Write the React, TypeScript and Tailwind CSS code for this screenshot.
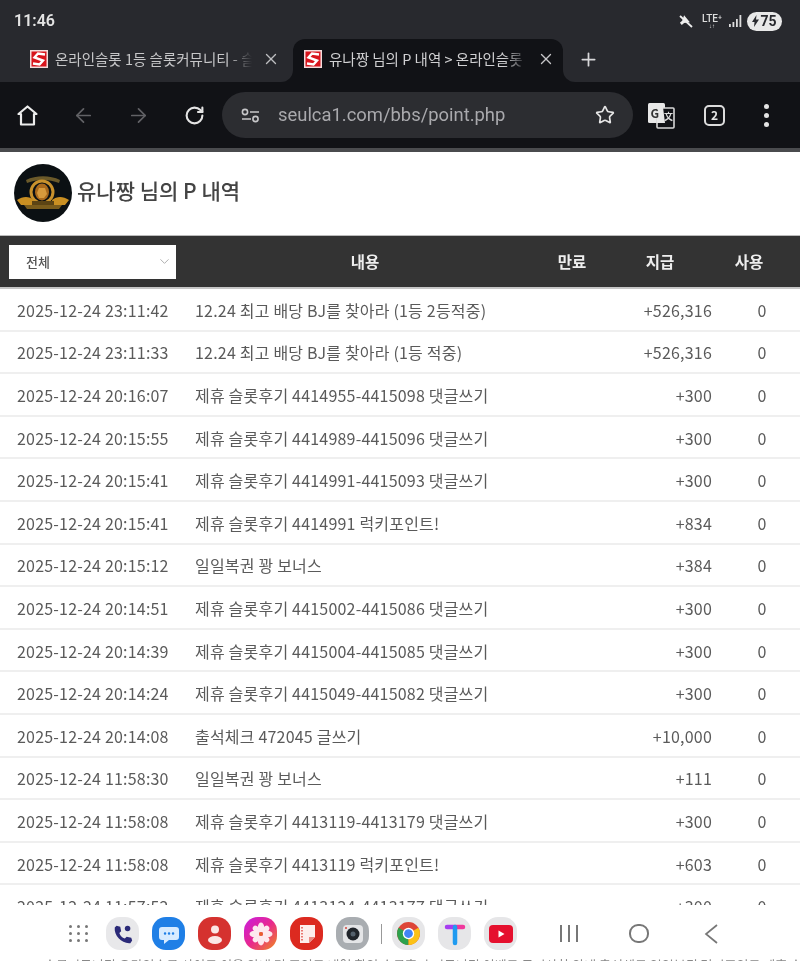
import { ChevronDown, ArrowLeft, ArrowRight, RotateCw, Star, X, Plus } from 'lucide-react'

const rows = [
  ['2025-12-24 23:11:42', '12.24 최고 배당 BJ를 찾아라 (1등 2등적중)', '+526,316'],
  ['2025-12-24 23:11:33', '12.24 최고 배당 BJ를 찾아라 (1등 적중)', '+526,316'],
  ['2025-12-24 20:16:07', '제휴 슬롯후기 4414955-4415098 댓글쓰기', '+300'],
  ['2025-12-24 20:15:55', '제휴 슬롯후기 4414989-4415096 댓글쓰기', '+300'],
  ['2025-12-24 20:15:41', '제휴 슬롯후기 4414991-4415093 댓글쓰기', '+300'],
  ['2025-12-24 20:15:41', '제휴 슬롯후기 4414991 럭키포인트!', '+834'],
  ['2025-12-24 20:15:12', '일일복권 꽝 보너스', '+384'],
  ['2025-12-24 20:14:51', '제휴 슬롯후기 4415002-4415086 댓글쓰기', '+300'],
  ['2025-12-24 20:14:39', '제휴 슬롯후기 4415004-4415085 댓글쓰기', '+300'],
  ['2025-12-24 20:14:24', '제휴 슬롯후기 4415049-4415082 댓글쓰기', '+300'],
  ['2025-12-24 20:14:08', '출석체크 472045 글쓰기', '+10,000'],
  ['2025-12-24 11:58:30', '일일복권 꽝 보너스', '+111'],
  ['2025-12-24 11:58:08', '제휴 슬롯후기 4413119-4413179 댓글쓰기', '+300'],
  ['2025-12-24 11:58:08', '제휴 슬롯후기 4413119 럭키포인트!', '+603'],
  ['2025-12-24 11:57:52', '제휴 슬롯후기 4413124-4413177 댓글쓰기', '+300'],
]

const Favicon = () => (
  <svg width="18" height="18" viewBox="0 0 18 18" className="shrink-0">
    <rect width="18" height="18" fill="#f3dcdc" />
    <rect x="1.5" y="1.5" width="15" height="15" fill="#d8141c" />
    <path d="M15 4.5L8 3.5 4.5 7.5l8.5 3-3.5 4L3 13.5" fill="none" stroke="#fff" strokeWidth="2.4" />
  </svg>
)

const Avatar = () => (
  <svg width="58" height="58" viewBox="0 0 58 58" className="shrink-0">
    <circle cx="29" cy="29" r="29" fill="#0b1013" />
    <path d="M12 16c10-5 24-5 34 0l-1 3c-10-4-22-4-32 0z" fill="#6b5a2a" />
    <circle cx="28" cy="28" r="11" fill="none" stroke="#c8912c" strokeWidth="3" />
    <ellipse cx="28" cy="28" rx="7" ry="8.5" fill="#a9691c" />
    <path d="M25 24h6l2 6-3 4h-5l-2-5z" fill="#d79a3c" />
    <path d="M3 36c6-4 12-4 17 0l-1 5H7zM55 36c-6-4-12-4-17 0l1 5h12z" fill="#c98f22" />
    <path d="M10 41h38l-3 4H13z" fill="#7a5c1c" />
    <path d="M18 37h22v4H18z" fill="#5c4414" />
  </svg>
)

const DockIcon = ({ bg, children }: { bg: string; children: React.ReactNode }) => (
  <div className={`flex h-[33px] w-[33px] items-center justify-center rounded-[14px] ${bg}`}>{children}</div>
)

export default function App() {
  return (
    <div className="flex h-[961px] w-[800px] flex-col overflow-hidden bg-white font-['Noto_Sans_CJK_KR','Noto_Sans',sans-serif] blur-[0.5px]">
      <div className="h-[82px] bg-[#28292e]">
        <div className="flex h-[39px] items-center justify-between pl-[14px] pr-[18px] pt-[3px]">
          <span className="font-['Roboto',sans-serif] text-[16px] font-semibold text-[#e4e4e4]">11:46</span>
          <div className="flex items-center">
            <svg width="16" height="16" viewBox="0 0 16 16">
              <path d="M2 6h3l5-3v9L5 9H2z" fill="#eee" transform="rotate(-40 7 8)" />
              <path d="M2 3l12 11" stroke="#eee" strokeWidth="1.8" />
            </svg>
            <div className="ml-[6px] flex w-[24px] flex-col items-center font-['Roboto',sans-serif] text-[10px] leading-[9px] font-medium text-[#ddd]">
              <span>LTE⁺</span>
              <span className="text-[6px] leading-[6px]">↓↑</span>
            </div>
            <svg width="14" height="14" viewBox="0 0 14 14" className="ml-[4px]">
              <path d="M1 10h1.8v3H1zM4.5 8h1.8v5H4.5zM8 5h1.8v8H8zM11.5 1h1.8v12h-1.8z" fill="#ddd" />
            </svg>
            <div className="ml-[5px] flex h-[19px] w-[35px] items-center justify-center gap-[1px] rounded-full bg-[#e8e8e8] font-['Roboto',sans-serif] text-[14px] font-bold text-[#28292e]">
              <svg width="7" height="12" viewBox="0 0 7 12" fill="#28292e">
                <path d="M4.5 0L0 7h2.5L2 12l5-7.5H4z" />
              </svg>
              <span>75</span>
            </div>
          </div>
        </div>
        <div className="flex h-[43px] items-stretch text-[14.5px]">
          <div className="flex w-[293px] items-center pb-[3px] pl-[30px] text-[#c6c6c8]">
            <Favicon />
            <span className="ml-[7px] w-[197px] overflow-hidden whitespace-nowrap [mask-image:linear-gradient(to_right,black_88%,transparent)]">
              온라인슬롯 1등 슬롯커뮤니티 - 슬롯
            </span>
            <X size={18} strokeWidth={1.8} className="ml-[10px] shrink-0 text-[#bdbdc0]" />
          </div>
          <div className="relative flex w-[270px] items-center rounded-t-[12px] bg-[#111216] pb-[3px] pl-[11px] text-[#d0d0d2]">
            <div className="absolute bottom-0 left-[-12px] h-[12px] w-[12px] bg-[#111216]">
              <div className="h-full w-full rounded-br-[12px] bg-[#28292e]" />
            </div>
            <div className="absolute bottom-0 right-[-12px] h-[12px] w-[12px] bg-[#111216]">
              <div className="h-full w-full rounded-bl-[12px] bg-[#28292e]" />
            </div>
            <Favicon />
            <span className="ml-[7px] w-[199px] overflow-hidden whitespace-nowrap [mask-image:linear-gradient(to_right,black_88%,transparent)]">
              유나짱 님의 P 내역 &gt; 온라인슬롯
            </span>
            <X size={18} strokeWidth={1.8} className="ml-[9px] shrink-0 text-[#c6c6c8]" />
          </div>
          <div className="flex w-[50px] items-center justify-center pb-[3px] text-[#d8d8da]">
            <Plus size={21} strokeWidth={2} />
          </div>
        </div>
      </div>

      <div className="flex h-[66px] items-center bg-[#111216]">
        <div className="flex w-[55px] justify-center">
          <svg width="23" height="23" viewBox="0 0 23 23" fill="none" stroke="#ececec" strokeWidth="2.2" strokeLinejoin="round">
            <path d="M11.5 2.5L2.5 10h2.5v10.5h13V10h2.5z" />
          </svg>
        </div>
        <div className="flex w-[56px] justify-center">
          <ArrowLeft size={23} strokeWidth={1.8} className="text-[#626266]" />
        </div>
        <div className="flex w-[55px] justify-center">
          <ArrowRight size={23} strokeWidth={1.8} className="text-[#626266]" />
        </div>
        <div className="flex w-[56px] justify-center">
          <RotateCw size={21} strokeWidth={2.4} className="text-[#e4e4e4]" />
        </div>
        <div className="flex h-[46px] w-[411px] items-center rounded-full bg-[#2c2d31] pl-[19px] pr-[18px]">
          <svg width="19" height="15" viewBox="0 0 19 15" fill="none" stroke="#c6c6c8" strokeWidth="1.6">
            <circle cx="4" cy="4" r="2.6" />
            <path d="M9 4h9M1 11h9" />
            <circle cx="14.5" cy="11" r="2.6" />
          </svg>
          <span className="ml-[18px] flex-1 font-['Roboto',sans-serif] text-[18.4px] text-[#a9a9ad]">
            seulca1.com/bbs/point.php
          </span>
          <Star size={20} strokeWidth={2} className="text-[#e6e6e6]" />
        </div>
        <div className="ml-[13px] flex w-[29px] justify-center">
          <svg width="28" height="27" viewBox="0 0 28 27">
            <rect x="1" y="1" width="17" height="20" rx="1.5" fill="#e8e8e8" />
            <rect x="10" y="6" width="17" height="20" rx="1" fill="#111216" stroke="#d8d8d8" strokeWidth="1.6" />
            <path d="M10 5h6l2 16-8 0z" fill="#e8e8e8" />
            <text x="3.5" y="16" fontSize="12" fontWeight="700" fill="#333">G</text>
            <text x="17" y="18" fontSize="9" fontWeight="700" fill="#ddd">文</text>
          </svg>
        </div>
        <div className="ml-[29px] flex h-[21px] w-[21px] items-center justify-center rounded-[5px] border-2 border-[#dcdcdc] text-[12px] font-bold text-[#e4e4e4]">
          2
        </div>
        <div className="ml-[39px] flex flex-col gap-[4px]">
          <div className="h-[5px] w-[5px] rounded-full bg-[#e4e4e4]" />
          <div className="h-[5px] w-[5px] rounded-full bg-[#e4e4e4]" />
          <div className="h-[5px] w-[5px] rounded-full bg-[#e4e4e4]" />
        </div>
      </div>
      <div className="h-[4px] bg-[#4a4b4e]" />

      <div className="flex h-[84px] items-center gap-[5px] border-b border-[#bbb] pb-[1px] pl-[14px]">
        <Avatar />
        <h1 className="pb-[5px] text-[21px] font-medium text-[#444]">유나짱 님의 P 내역</h1>
      </div>

      <div className="grid h-[53px] grid-cols-[187px_356px_58px_118px_60px] items-center border-b-2 border-[#c6c6c6] bg-[#333333] text-center text-[15.5px] font-bold text-[#eeeeee]">
        <div className="pl-[9px]">
          <div className="flex h-[34px] w-[167px] items-center justify-between bg-white pl-[17px] pr-[4px] text-[13px] font-medium text-[#555]">
            <span>전체</span>
            <ChevronDown size={15} strokeWidth={1.5} className="text-[#aaa]" />
          </div>
        </div>
        <div>내용</div>
        <div>만료</div>
        <div>지급</div>
        <div>사용</div>
      </div>

      <div className="min-h-0 flex-1 overflow-hidden">
        {rows.map(([date, text, amount], i) => (
          <div
            key={i}
            className="grid h-[42.6px] grid-cols-[195px_430px_87px_88px] items-center border-b-2 border-[#efefef] pt-[1px] text-[16px] tracking-[0.2px] text-[#5a5a5a]"
          >
            <div className="pl-[17px] whitespace-nowrap">{date}</div>
            <div className="whitespace-nowrap">{text}</div>
            <div className="text-right">{amount}</div>
            <div className="pl-[12px] text-center">0</div>
          </div>
        ))}
      </div>

      <div className="flex h-[56px] flex-col bg-white">
        <div className="flex h-[51px] items-center pt-[6px]">
          <div className="ml-[69px] grid w-[20px] grid-cols-3 gap-[4px]">
            {Array.from({ length: 9 }).map((_, i) => (
              <div key={i} className="h-[3px] w-[3px] rounded-full bg-[#777]" />
            ))}
          </div>
          <div className="ml-[17px] flex gap-[13px]">
            <DockIcon bg="bg-[#e8e8ea]">
              <svg width="22" height="22" viewBox="0 0 24 24" fill="#2b2a78">
                <path d="M5 3l4 1 1 5-2 2c1 3 3 5 6 6l2-2 5 1 1 3-2 3C11 23 2 14 3 5z" />
                <circle cx="17" cy="6" r="3" />
              </svg>
            </DockIcon>
            <DockIcon bg="bg-[#1f7fe6]">
              <svg width="24" height="24" viewBox="0 0 24 24">
                <path d="M5 5h14a3 3 0 013 3v7a3 3 0 01-3 3h-7l-5 4v-4H5a3 3 0 01-3-3V8a3 3 0 013-3z" fill="#d7ebff" />
                <path d="M8 11.5h.1M12 11.5h.1M16 11.5h.1" stroke="#1f7fe6" strokeWidth="2.4" strokeLinecap="round" />
              </svg>
            </DockIcon>
            <DockIcon bg="bg-[#d5322f]">
              <svg width="20" height="22" viewBox="0 0 20 22" fill="#fbe6e4">
                <circle cx="10" cy="6.5" r="4" />
                <ellipse cx="10" cy="17" rx="7" ry="4" />
              </svg>
            </DockIcon>
            <DockIcon bg="bg-[linear-gradient(135deg,#c81ee0,#e8288f_50%,#f08a1c)]">
              <svg width="26" height="26" viewBox="0 0 26 26" fill="#fde9ef">
                <ellipse cx="13" cy="6.5" rx="3.2" ry="5" />
                <ellipse cx="13" cy="19.5" rx="3.2" ry="5" />
                <ellipse cx="6.5" cy="13" rx="5" ry="3.2" />
                <ellipse cx="19.5" cy="13" rx="5" ry="3.2" />
                <ellipse cx="8.5" cy="8.5" rx="4.4" ry="3" transform="rotate(45 8.5 8.5)" />
                <ellipse cx="17.5" cy="17.5" rx="4.4" ry="3" transform="rotate(45 17.5 17.5)" />
                <ellipse cx="17.5" cy="8.5" rx="4.4" ry="3" transform="rotate(-45 17.5 8.5)" />
                <ellipse cx="8.5" cy="17.5" rx="4.4" ry="3" transform="rotate(-45 8.5 17.5)" />
                <circle cx="13" cy="13" r="2" fill="#e8602c" />
              </svg>
            </DockIcon>
            <DockIcon bg="bg-[#dc2a20]">
              <svg width="22" height="24" viewBox="0 0 22 24">
                <path d="M4 3h15v12l-6 6H4z" fill="#fdeeec" />
                <path d="M13 21v-6h6z" fill="#e98a82" />
                <path d="M6 5v14" stroke="#dc2a20" strokeWidth="1.2" strokeDasharray="1.5 1.5" />
              </svg>
            </DockIcon>
            <DockIcon bg="bg-[#a9adb1]">
              <svg width="26" height="26" viewBox="0 0 26 26">
                <rect x="3" y="4" width="20" height="18" rx="4" fill="#e4e5e7" />
                <circle cx="13" cy="13" r="6.5" fill="#20242a" />
                <circle cx="13" cy="13" r="2.5" fill="#54606c" />
                <circle cx="6" cy="7" r="1" fill="#d6443c" />
              </svg>
            </DockIcon>
          </div>
          <div className="ml-[12px] h-[20px] w-px bg-[#999]" />
          <div className="ml-[10px] flex gap-[13px]">
            <DockIcon bg="bg-[#e6e6e8]">
              <svg width="25" height="25" viewBox="0 0 24 24">
                <circle cx="12" cy="12" r="11" fill="#dd4437" />
                <path d="M12 12L2.5 6.5A11 11 0 0012 23z" fill="#2ca24d" />
                <path d="M12 12l9.5-5.5A11 11 0 0112 23z" fill="#fbc116" />
                <circle cx="12" cy="12" r="5.5" fill="#fff" />
                <circle cx="12" cy="12" r="4.2" fill="#4285f4" />
              </svg>
            </DockIcon>
            <DockIcon bg="bg-[#e6e6e8]">
              <svg width="24" height="24" viewBox="0 0 24 24" fill="none" strokeWidth="4.5" strokeLinecap="round">
                <path d="M4 5h8" stroke="#a63df0" />
                <path d="M12 5h8" stroke="#f0389c" />
                <path d="M12 5v16" stroke="#1f9bf0" />
              </svg>
            </DockIcon>
            <DockIcon bg="bg-[#e6e6e8]">
              <svg width="26" height="20" viewBox="0 0 26 20">
                <rect x="1" y="1" width="24" height="18" rx="4" fill="#e5102e" />
                <path d="M10.5 6.5l6 3.5-6 3.5z" fill="#fff" />
              </svg>
            </DockIcon>
          </div>
          <div className="ml-[43px] flex gap-[6.5px]">
            <div className="h-[17px] w-[1.5px] bg-[#777]" />
            <div className="h-[17px] w-[1.5px] bg-[#777]" />
            <div className="h-[17px] w-[1.5px] bg-[#777]" />
          </div>
          <div className="ml-[51px] h-[19px] w-[20px] rounded-[9px] border-2 border-[#777]" />
          <svg width="14" height="20" viewBox="0 0 14 20" fill="none" stroke="#777" strokeWidth="1.7" className="ml-[55px]">
            <path d="M13 1L2 10l11 9" />
          </svg>
        </div>
        <div className="mt-[2px] h-[3px] overflow-hidden pl-[44px] text-[13px] leading-[14px] whitespace-nowrap text-[#888]">
          슬롯커뮤니티 온라인슬롯 사이트 이용 안내 및 포인트 내역 확인 슬롯후기 커뮤니티 이벤트 공지사항 안내 출석체크 일일복권 럭키포인트 제휴 슬롯 안내
        </div>
      </div>
    </div>
  )
}
